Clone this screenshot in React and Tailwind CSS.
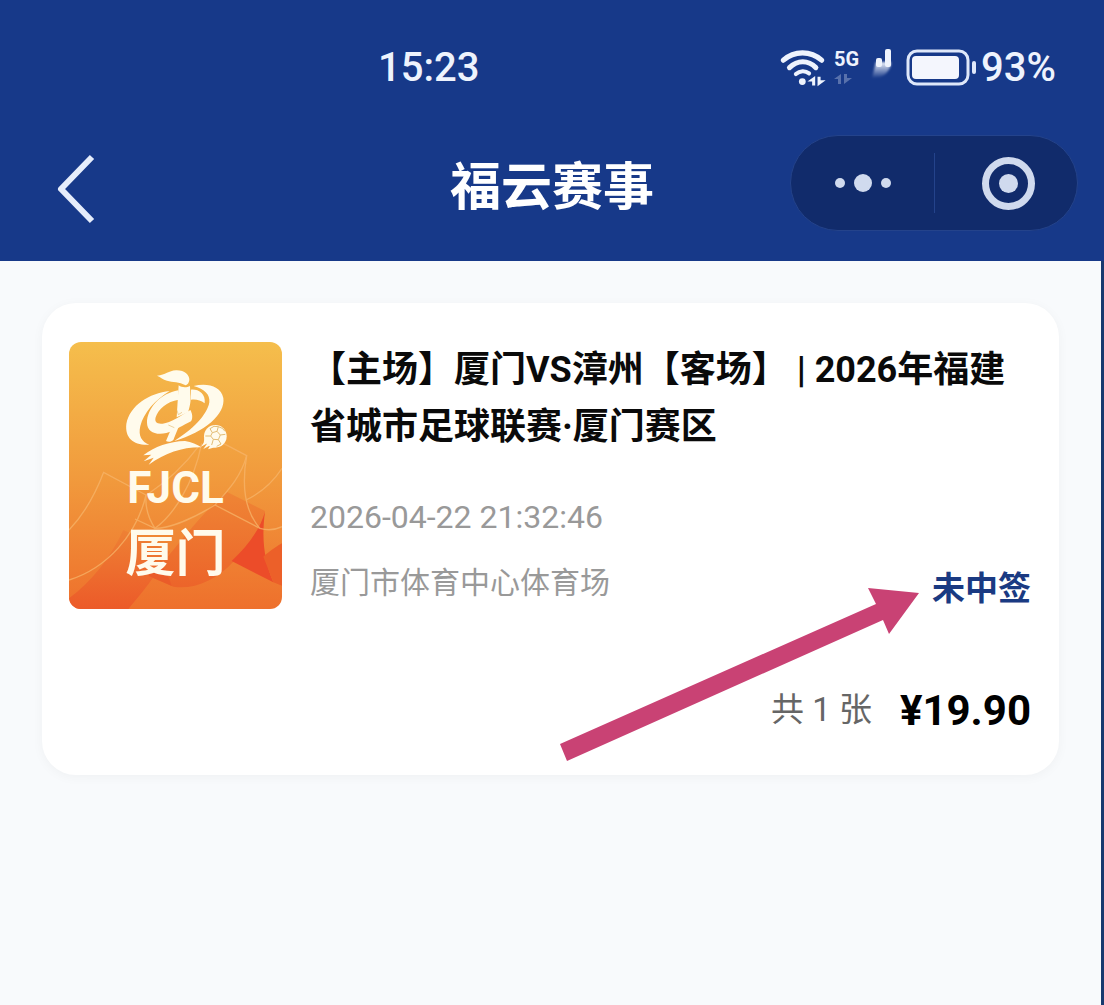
import React from 'react';

const order = {
  title: '【主场】厦门VS漳州【客场】 | 2026年福建省城市足球联赛·厦门赛区',
  time: '2026-04-22 21:32:46',
  venue: '厦门市体育中心体育场',
  status: '未中签',
  count: 1,
  price: '19.90'
};

const WifiIcon = () => (
  <svg viewBox="36 38 136 112" className="h-[38px] w-[46px]" fill="none" aria-hidden="true">
    <g stroke="#eef3fd" strokeWidth="15" strokeLinecap="round">
      <path d="M46 71 C78 42 127 42 159 71" />
      <path d="M64 93 C88 70 119 70 142 93" />
      <path d="M83 112 C95 101 111 101 122 110" strokeWidth="12" />
    </g>
    <circle cx="102" cy="134" r="10" fill="#eef3fd" />
    <path d="M140 118 V146 H131 V134 H117 Z M147 148 V120 H156 V130 H171 Z" fill="#eef3fd" />
  </svg>
);

const SignalIcon = () => (
  <svg viewBox="0 0 30 37" className="h-[37px] w-[30px]" aria-hidden="true">
    <defs>
      <linearGradient id="fade" x1="0" y1="0" x2="0" y2="1">
        <stop offset="0" stopColor="#eef3fd" />
        <stop offset="1" stopColor="#eef3fd" stopOpacity="0" />
      </linearGradient>
      <filter id="soft">
        <feGaussianBlur stdDeviation="1" />
      </filter>
    </defs>
    <rect x="21" y="0" width="6" height="18" rx="2" fill="#eef3fd" />
    <rect x="12" y="9" width="6" height="9" rx="2" fill="#eef3fd" />
    <path d="M12 13 H27 C27 22 19 30 8 29 Z" fill="url(#fade)" filter="url(#soft)" />
  </svg>
);

const BatteryIcon = () => (
  <svg viewBox="0 0 71 37" className="h-[37px] w-[71px]" aria-hidden="true">
    <rect x="2" y="2" width="60" height="33" rx="9" fill="none" stroke="#dfe8fa" strokeWidth="3" />
    <rect x="6" y="7" width="47" height="23" rx="4" fill="#f4f6fd" />
    <rect x="66" y="12" width="4" height="13" rx="2" fill="#dfe8fa" />
  </svg>
);

const StatusBar = () => (
  <div className="flex h-[135px] items-center justify-between pr-12 pl-[378px] text-[40px] font-medium text-[#eef3fd]">
    <span>15:23</span>
    <div className="flex items-center">
      <WifiIcon />
      <div className="ml-2 flex h-[37px] w-[30px] flex-col">
        <span className="text-[20px] leading-5 font-bold">5G</span>
        <svg viewBox="0 0 24 13" className="mt-1 h-[13px] w-6 opacity-30" aria-hidden="true">
          <path d="M7 1 V11 H4 V6 H0 Z M10 11 V1 H13 V5 H18 Z" fill="#eef3fd" />
        </svg>
      </div>
      <SignalIcon />
      <div className="ml-3">
        <BatteryIcon />
      </div>
      <span className="ml-1">93%</span>
    </div>
  </div>
);

const NavBar = () => (
  <div className="grid grid-cols-[1fr_auto_1fr] items-center px-[26px] pb-[30px]">
    <button type="button" aria-label="返回" className="pl-[30px]">
      <svg viewBox="0 0 40 84" className="h-[84px] w-10" fill="none">
        <path d="M36 16 L5 48 L36 80" stroke="#e6edfb" strokeWidth="6" strokeLinejoin="round" />
      </svg>
    </button>
    <h1 className="font-['Noto_Sans_CJK_SC',sans-serif] text-[51px] leading-[96px] font-bold text-white">福云赛事</h1>
    <div className="flex h-24 w-[288px] items-center justify-self-end rounded-full border border-[#24438b] bg-[#112b6b]">
      <button type="button" aria-label="更多" className="flex w-1/2 items-center justify-center gap-[9px]">
        <span className="size-[10px] rounded-full bg-[#d0daee]" />
        <span className="size-[18px] rounded-full bg-[#d0daee]" />
        <span className="size-[10px] rounded-full bg-[#d0daee]" />
      </button>
      <button type="button" aria-label="关闭" className="flex h-[60px] w-1/2 items-center justify-center border-l border-[#24438b] pl-1">
        <span className="flex size-[53px] items-center justify-center rounded-full border-[7px] border-[#d0daee]">
          <span className="size-[19px] rounded-full bg-[#d0daee]" />
        </span>
      </button>
    </div>
  </div>
);

const PosterBackground = () => (
  <svg viewBox="27 21 639 801" preserveAspectRatio="none" className="absolute inset-0 h-full w-full" aria-hidden="true">
    <defs>
      <linearGradient id="sky" x1="0" y1="0" x2="0" y2="1">
        <stop offset="0" stopColor="#f5be4c" />
        <stop offset="0.5" stopColor="#f19b3d" />
        <stop offset="1" stopColor="#ee702c" />
      </linearGradient>
      <linearGradient id="fold" x1="0" y1="0" x2="0" y2="1">
        <stop offset="0" stopColor="#ee8134" />
        <stop offset="1" stopColor="#ec5a29" />
      </linearGradient>
      <linearGradient id="ridge" x1="0" y1="0" x2="0" y2="1">
        <stop offset="0" stopColor="#ef8535" />
        <stop offset="1" stopColor="#ec642a" />
      </linearGradient>
    </defs>
    <rect x="27" y="21" width="639" height="801" fill="url(#sky)" />
    <path d="M27 790 C95 740 150 670 190 585 L330 650 C290 720 240 780 205 822 H27 Z" fill="url(#fold)" />
    <path d="M500 470 L615 528 C605 590 580 660 520 680 C470 735 400 765 340 755 L270 725 C350 640 400 560 500 470 Z" fill="url(#ridge)" />
    <path d="M615 530 C600 585 560 635 515 678 L640 742 C615 680 603 620 615 530 Z" fill="#ec4c29" />
    <path d="M666 625 C640 640 622 655 610 665 L640 742 L666 752 Z" fill="#ec6029" />
    <path d="M265 722 L335 752 C325 720 310 700 300 680 Z" fill="#ea5c29" />
    <g fill="none" stroke="#f7b56a" strokeWidth="4" opacity="0.75">
      <path d="M27 585 C75 535 105 480 131 412 L258 480 C230 600 140 700 27 735" />
      <path d="M258 480 C255 520 265 550 285 580 C340 540 400 450 425 325" />
      <path d="M225 552 L285 580 C330 580 400 550 465 510 C510 460 545 420 560 362 L490 325" />
      <path d="M260 480 C320 440 375 390 415 335" />
      <path d="M560 362 C545 450 555 530 600 580 C625 588 645 585 666 575" />
      <path d="M465 510 L600 580 M558 495 C600 475 640 440 666 400" />
    </g>
  </svg>
);

const LeagueLogo = () => (
  <svg viewBox="0 0 390 330" className="h-[110px] w-[130px]" aria-hidden="true">
    <g fill="#fffbec">
      <path d="M138 47 C165 45 172 32 195 31 C220 30 236 45 235 60 C234 68 230 74 224 76 C205 64 185 68 168 62 C155 58 150 52 138 47 Z" />
      <path d="M176 93 C115 100 57 135 46 192 C41 236 70 257 115 254 C92 245 81 228 88 198 C98 158 132 120 176 93 Z" />
      <path d="M202 91 C148 100 108 146 108 188 C108 216 134 226 166 219 C192 213 217 194 240 184 C247 173 243 158 238 150 C208 168 180 188 155 191 C137 193 130 185 134 172 C141 148 168 124 203 119 Z" />
      <path d="M203 76 C213 84 228 83 237 78 L238 102 C241 122 236 142 231 157 L197 172 Z" />
      <path d="M178 212 L203 200 L187 240 C180 247 170 246 165 243 Z" />
      <path d="M240 89 C262 87 285 101 281 130 C268 120 255 117 240 119 Z" />
      <path d="M248 78 C288 68 330 78 337 114 C344 162 282 216 190 243 C243 210 289 165 295 127 C298 104 281 87 248 78 Z" />
      <path d="M97 286 C130 260 175 244 222 243 C242 245 258 254 271 262 C215 261 165 278 113 314 L128 293 L98 304 L121 284 Z" />
      <circle cx="313" cy="229" r="34" />
      <path d="M284 216 L278 248 L270 260 L289 250 L277 267 L298 256 L291 268 L314 261 Z" />
    </g>
    <g fill="none" stroke="#e3bd74" strokeWidth="3">
      <path d="M304 218 L318 214 L328 225 L322 239 L307 238 L299 228 Z" />
      <path d="M304 218 L297 206 M318 214 L322 200 M328 225 L343 223 M322 239 L330 252 M307 238 L302 255 M299 228 L283 228" />
      <path d="M297 206 L309 199 L322 200 L334 205 L342 214 M330 252 L317 259" />
      <path d="M198 151 L202 164 L213 157 M172 195 L190 203" strokeWidth="2" />
    </g>
  </svg>
);

const Poster = () => (
  <div className="relative flex h-[267px] w-[213px] shrink-0 flex-col items-center overflow-hidden rounded-xl text-[#fffbec]">
    <PosterBackground />
    <div className="relative flex flex-col items-center pt-[18px]">
      <LeagueLogo />
      <span className="text-[44px] leading-9 font-bold">FJCL</span>
      <span className="mt-3 text-[50px] leading-[72px] font-bold">厦门</span>
    </div>
  </div>
);

const Arrow = () => (
  <svg viewBox="0 0 359 174" className="absolute top-[284px] right-[140px] h-[174px] w-[359px]" aria-hidden="true">
    <path d="M359 6 L308 1 L316 17 L0 157 L7 174 L323 33 L329 47 Z" fill="#c94274" />
  </svg>
);

const OrderCard = ({ item }) => (
  <article className="relative rounded-[34px] bg-white pt-[39px] pr-7 pb-[41px] pl-[27px] shadow-[0_2px_12px_rgba(0,0,0,0.04)]">
    <div className="flex gap-7">
      <Poster />
      <div className="min-w-0 flex-1">
        <h2 className="text-[36px] leading-[57px] font-bold text-[#0a0a0a]">{item.title}</h2>
        <p className="mt-[39px] text-[32px] leading-[44px] text-[#999999]">{item.time}</p>
        <div className="mt-[22px] flex items-start justify-between">
          <p className="text-[30px] leading-[44px] text-[#999999]">{item.venue}</p>
          <p className="text-[33px] leading-[56px] font-bold text-[#1a3a82]">{item.status}</p>
        </div>
      </div>
    </div>
    <div className="mt-[69px] flex h-12 items-center justify-end gap-7">
      <span className="text-[33px] text-[#666666]">共 {item.count} 张</span>
      <span className="text-[42px] font-bold text-black">¥{item.price}</span>
    </div>
    <Arrow />
  </article>
);

const App = () => {
  return (
    <div className="flex min-h-screen flex-col bg-[#f8fafc] font-['Roboto','Noto_Sans_CJK_SC',sans-serif]">
      <header className="bg-[#173989]">
        <StatusBar />
        <NavBar />
      </header>
      <main className="flex-1 border-r-[3px] border-[#17396f] px-[42px] py-[42px]">
        <OrderCard item={order} />
      </main>
    </div>
  );
};

export default App;
